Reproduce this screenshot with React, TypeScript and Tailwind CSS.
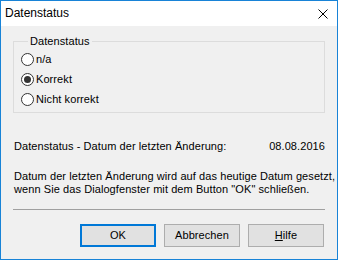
import React, { useState } from "react";

type StatusKey = "na" | "ok" | "nok";

const OPTIONS: { key: StatusKey; label: string }[] = [
  { key: "na", label: "n/a" },
  { key: "ok", label: "Korrekt" },
  { key: "nok", label: "Nicht korrekt" },
];

function Radio({ checked }: { checked: boolean }) {
  return (
    <span className="w-[13px] h-[13px] rounded-full border border-[#333333] bg-white flex items-center justify-center shrink-0">
      {checked && <span className="w-[7px] h-[7px] rounded-full bg-[#333333]" />}
    </span>
  );
}

export default function App() {
  const [status, setStatus] = useState<StatusKey>("ok");
  return (
    <div className="w-[338px] h-[260px] flex flex-col bg-[#f0f0f0] border border-[#1883d7] text-black text-[11px] leading-[13px] tracking-[0.08px] font-['Liberation_Sans',Arial,sans-serif] overflow-hidden">
      {/* Title bar */}
      <div className="h-[25px] shrink-0 bg-white flex items-center justify-between pl-[4px] pr-[9px]">
        <span className="text-[12px] tracking-normal">Datenstatus</span>
        <svg width="10" height="10" viewBox="0 0 10 10" className="mt-[1px]">
          <path d="M0.5 0.5 L9.5 9.5 M9.5 0.5 L0.5 9.5" stroke="#000" strokeWidth="1" />
        </svg>
      </div>

      {/* Body */}
      <div className="flex flex-col px-[12px]">
        <fieldset className="mt-[9px] border border-[#dcdcdc] pl-[7px] pt-[1px] pb-[3px]">
          <legend className="ml-[7px] px-[2px] leading-[13px]">Datenstatus</legend>
          {OPTIONS.map(o => (
            <button
              key={o.key}
              onClick={() => setStatus(o.key)}
              className="h-[20px] flex items-center gap-[2px] text-left"
            >
              <Radio checked={status === o.key} />
              <span>{o.label}</span>
            </button>
          ))}
        </fieldset>

        <div className="mt-[27px] flex justify-between pl-[1px]">
          <span>Datenstatus - Datum der letzten Änderung:</span>
          <span>08.08.2016</span>
        </div>

        <p className="mt-[17px] pl-[1px] whitespace-nowrap">
          Datum der letzten Änderung wird auf das heutige Datum gesetzt,
          <br />
          wenn Sie das Dialogfenster mit dem Button "OK" schließen.
        </p>

        <div className="mt-[13px] h-[1px] bg-[#a0a0a0]" />

        <div className="mt-[14px] flex justify-end gap-[8px] pr-[1px]">
          <button className="w-[76px] h-[23px] bg-[#e1e1e1] border-2 border-[#0078d7]">OK</button>
          <button className="w-[76px] h-[23px] bg-[#e1e1e1] border border-[#adadad]">Abbrechen</button>
          <button className="w-[76px] h-[23px] bg-[#e1e1e1] border border-[#adadad]">
            <u>H</u>ilfe
          </button>
        </div>
      </div>
    </div>
  );
}
